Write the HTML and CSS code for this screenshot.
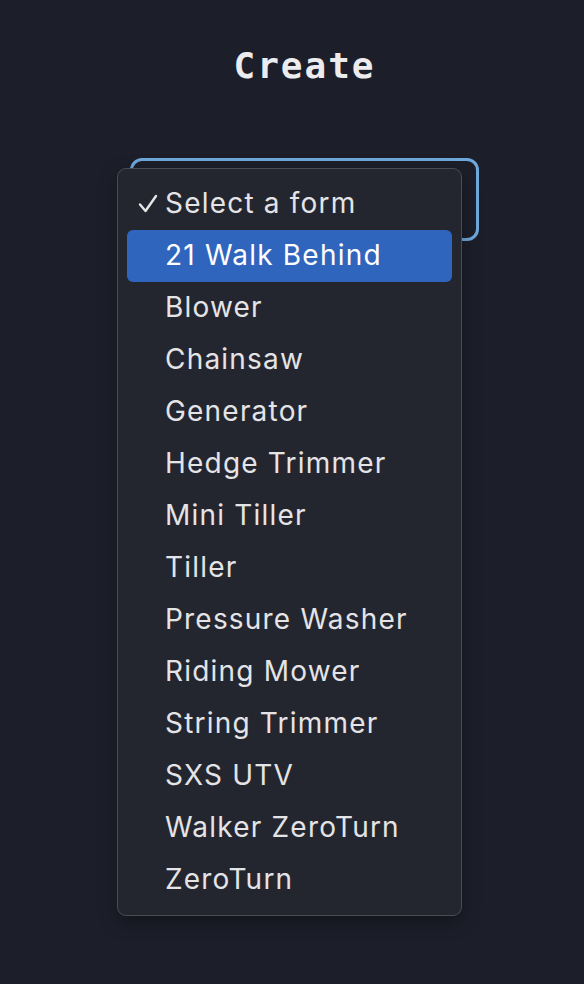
FILE: index.html
```html
<!DOCTYPE html>
<html>
<head>
<meta charset="utf-8">
<link rel="stylesheet" href="styles.css">
</head>
<body>
<main class="page">
  <h1 class="title">Create</h1>
  <div class="field">
    <div class="select-box"></div>
    <div class="menu">
      <div class="opt checked"><svg class="check" width="22" height="22" viewBox="0 0 22 22"><path d="M3 11.5 L8.5 18 L19 3" fill="none" stroke="#e6e6e8" stroke-width="2.4" stroke-linecap="round" stroke-linejoin="round"/></svg>Select a form</div>
      <div class="opt active">21 Walk Behind</div>
      <div class="opt">Blower</div>
      <div class="opt">Chainsaw</div>
      <div class="opt">Generator</div>
      <div class="opt">Hedge Trimmer</div>
      <div class="opt">Mini Tiller</div>
      <div class="opt">Tiller</div>
      <div class="opt">Pressure Washer</div>
      <div class="opt">Riding Mower</div>
      <div class="opt">String Trimmer</div>
      <div class="opt">SXS UTV</div>
      <div class="opt">Walker ZeroTurn</div>
      <div class="opt">ZeroTurn</div>
    </div>
  </div>
</main>
</body>
</html>
```
FILE: styles.css
```css
html, body {
  margin: 0;
  padding: 0;
  background: #1c1f2a;
  height: 100%;
}
.page {
  width: 584px;
  height: 984px;
  box-sizing: border-box;
  padding: 44px 0 0 25px;
  display: flex;
  flex-direction: column;
  align-items: center;
  font-family: Inter, "Liberation Sans", sans-serif;
}
.title {
  margin: 0;
  font-family: "DejaVu Sans Mono", monospace;
  font-weight: bold;
  font-size: 36px;
  line-height: 44px;
  letter-spacing: 2px;
  color: #ececee;
}
.field {
  position: relative;
  margin-top: 70px;
  width: 349px;
}
.select-box {
  box-sizing: border-box;
  height: 83px;
  border: 3px solid #6fa8dc;
  border-radius: 12px;
}
.menu {
  position: absolute;
  left: -13px;
  top: 10px;
  width: 345px;
  height: 748px;
  box-sizing: border-box;
  padding: 9px 9px 9px 9px;
  background: #24262f;
  border: 1px solid #4a4b53;
  border-radius: 9px;
  box-shadow: 0 6px 18px rgba(0, 0, 0, 0.35);
  display: flex;
  flex-direction: column;
}
.opt {
  position: relative;
  height: 52px;
  line-height: 50px;
  padding-left: 38px;
  font-size: 28px;
  letter-spacing: 1.2px;
  color: #e4e4e7;
  border-radius: 6px;
  white-space: nowrap;
}
.opt.active {
  background: #3065bd;
  color: #ffffff;
}
.check {
  position: absolute;
  left: 10px;
  top: 15px;
}
```
